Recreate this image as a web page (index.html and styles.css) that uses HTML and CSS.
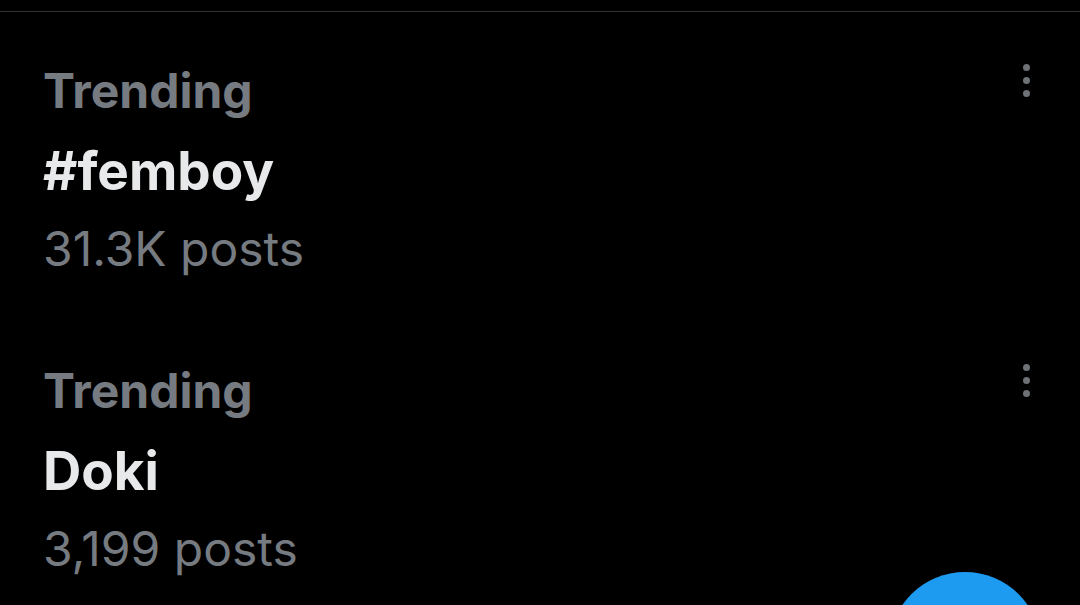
FILE: index.html
```html
<!DOCTYPE html>
<html>
<head>
<meta charset="utf-8">
<link rel="stylesheet" href="styles.css">
</head>
<body>
<div class="page">
  <div class="divider"></div>
  <div class="trend">
    <div class="trend-text">
      <div class="label">Trending</div>
      <div class="title">#femboy</div>
      <div class="count">31.3K posts</div>
    </div>
    <div class="more"><span></span><span></span><span></span></div>
  </div>
  <div class="trend">
    <div class="trend-text">
      <div class="label">Trending</div>
      <div class="title">Doki</div>
      <div class="count">3,199 posts</div>
    </div>
    <div class="more"><span></span><span></span><span></span></div>
  </div>
  <div class="fab"></div>
</div>
</body>
</html>
```
FILE: styles.css
```css
html, body {
  margin: 0;
  padding: 0;
  background: #000;
  height: 100%;
  overflow: hidden;
}
.page {
  position: relative;
  width: 1080px;
  height: 605px;
  overflow: hidden;
  font-family: Inter, Roboto, "Liberation Sans", sans-serif;
}
.divider {
  height: 11px;
  border-bottom: 1px solid #2f3336;
}
.trend {
  display: flex;
  justify-content: space-between;
  padding: 38px 50px 0 43px;
  height: 262px;
}
.trend-text {
  display: flex;
  flex-direction: column;
}
.label {
  color: #767b81;
  font-weight: 700;
  font-size: 48px;
  line-height: 82px;
  letter-spacing: 0;
}
.title {
  color: #e7e9ea;
  font-weight: 700;
  font-size: 53px;
  line-height: 78px;
  letter-spacing: 0;
}
.count {
  color: #767b81;
  font-weight: 400;
  font-size: 48px;
  line-height: 78px;
  letter-spacing: 0;
}
.more {
  display: flex;
  flex-direction: column;
  gap: 6px;
  padding-top: 14px;
}
.more span {
  width: 7px;
  height: 7px;
  border-radius: 50%;
  background: #6e7175;
}
.fab {
  position: absolute;
  left: 889px;
  top: 572px;
  width: 152px;
  height: 152px;
  border-radius: 50%;
  background: #1d9bf0;
}
```
